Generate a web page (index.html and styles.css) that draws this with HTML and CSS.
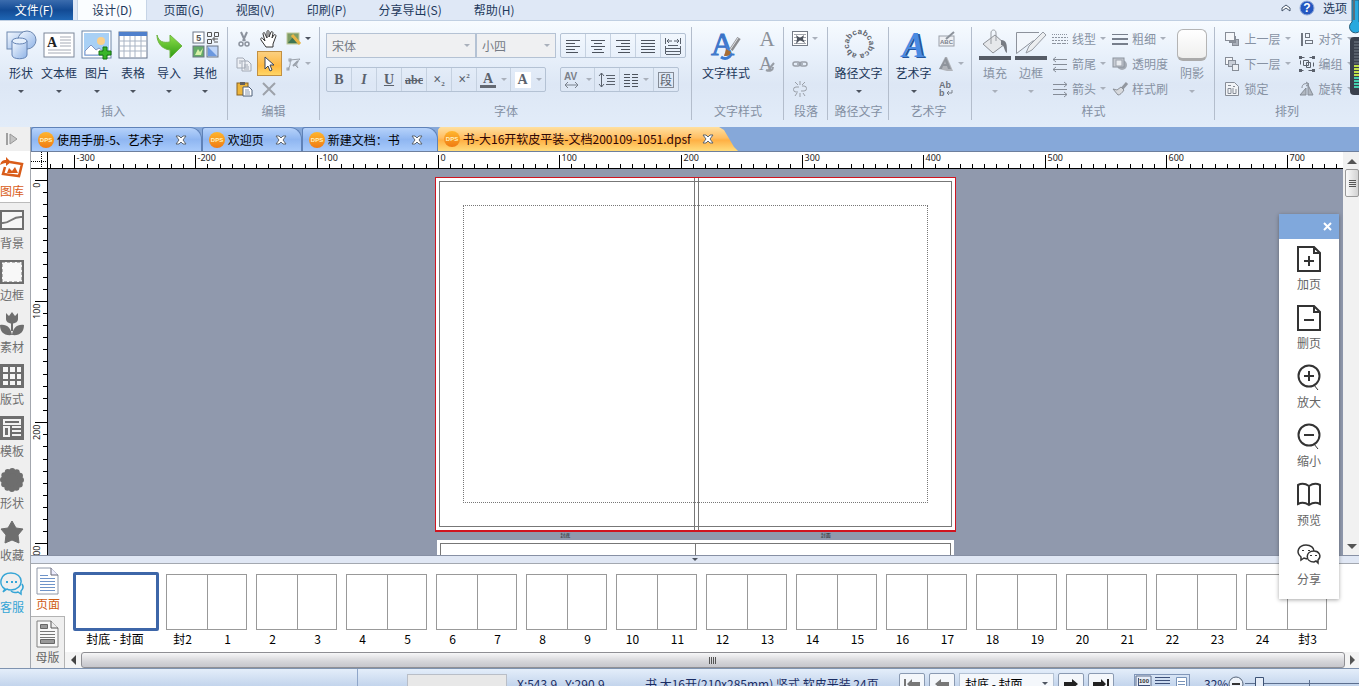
FILE: index.html
```html
<!DOCTYPE html>
<html lang="zh-CN">
<head>
    <meta charset="UTF-8">
    <meta name="viewport" content="width=device-width, initial-scale=1.0">
    <title>书-大16开软皮平装-文档200109-1051.dpsf</title>
    <link rel="stylesheet" href="styles.css">
</head>
<body>
    <svg class="defs" width="0" height="0" aria-hidden="true">
        <defs>
            <linearGradient id="g-blue" x1="0" y1="0" x2="1" y2="1"><stop offset="0" stop-color="#f4f9ff"/><stop offset="1" stop-color="#8fb3e6"/></linearGradient>
            <linearGradient id="g-green" x1="0" y1="0" x2="0" y2="1"><stop offset="0" stop-color="#8fe04a"/><stop offset="1" stop-color="#2c9a12"/></linearGradient>
            <linearGradient id="g-letter" x1="0" y1="0" x2="0" y2="1"><stop offset="0" stop-color="#2f62b8"/><stop offset="1" stop-color="#5c9bee"/></linearGradient>
            <linearGradient id="g-dps" x1="0" y1="0" x2="0" y2="1"><stop offset="0" stop-color="#ffb62e"/><stop offset="1" stop-color="#f07b12"/></linearGradient>
        </defs>
        <symbol id="dps" viewBox="0 0 16 16"><circle cx="8" cy="8" r="8" fill="url(#g-dps)"/><text x="8" y="10" text-anchor="middle" font-size="6" font-weight="bold" fill="#fff3c0" font-family="Liberation Sans">DPS</text></symbol>
        <symbol id="close" viewBox="0 0 12 10"><path d="M1 1h3l2 2 2-2h3L8 5l3 4H8L6 7 4 9H1l3-4z" fill="#fff" stroke="#5d6670"/></symbol>
    </svg>

    <nav class="menu">
        <button class="file">文件(F)</button>
        <button class="current">设计(D)</button>
        <button>页面(G)</button>
        <button>视图(V)</button>
        <button>印刷(P)</button>
        <button>分享导出(S)</button>
        <button>帮助(H)</button>
        <div class="menu-right">
            <svg width="10" height="8" viewBox="0 0 10 8"><path d="M1 4l4-3 4 3v3L5 4 1 7z" fill="#fff" stroke="#44546a"/></svg>
            <svg width="16" height="16" viewBox="0 0 16 16"><circle cx="8" cy="8" r="7" fill="#2456c0" stroke="#8fa8d8"/><text x="8" y="12" text-anchor="middle" font-size="12" font-weight="bold" fill="#fff" font-family="Liberation Sans">?</text></svg>
            <button>选项 <i class="caret"></i></button>
        </div>
    </nav>

    <header class="ribbon">
        <section class="group insert">
            <div class="tools">
                <button class="big"><svg width="32" height="32" viewBox="0 0 32 32"><rect x="2" y="3" width="20" height="17" fill="url(#g-blue)" stroke="#6d88b0"/><circle cx="22" cy="11" r="9" fill="url(#g-blue)" stroke="#6d88b0"/><path d="M7 12v14c0 5 15 5 15 0V12" fill="url(#g-blue)" stroke="#6483b4"/><ellipse cx="14.500" cy="12" rx="7.500" ry="3" fill="#e6f0fc" stroke="#6483b4"/></svg><span>形状</span><i class="caret"></i></button>
                <button class="big wide"><svg width="32" height="32" viewBox="0 0 32 32"><rect x="1" y="4" width="30" height="24" fill="#fff" stroke="#7c879a"/><text x="4" y="18" font-size="14" font-weight="bold" fill="#222" font-family="Liberation Serif">A</text><path d="M17 8h11M17 11h11M17 14h11M17 17h11M5 21h23M5 24h23" stroke="#a5aab5"/></svg><span>文本框</span><i class="caret"></i></button>
                <button class="big"><svg width="32" height="32" viewBox="0 0 32 32"><rect x="1" y="2" width="29" height="27" fill="#fff" stroke="#6f87a8"/><rect x="3" y="4" width="25" height="23" fill="#a8d0f5"/><circle cx="20" cy="12" r="4" fill="#fbd08a"/><path d="M4 26V22l6-6 5 5 3-2 9 7z" fill="#fff" stroke="#8296c4"/><path d="M22 18h4v4h4v4h-4v4h-4v-4h-4v-4h4z" fill="#38b528" stroke="#17750e"/></svg><span>图片</span><i class="caret"></i></button>
                <button class="big"><svg width="32" height="32" viewBox="0 0 32 32"><rect x="2" y="3" width="28" height="26" fill="#fff" stroke="#64728a"/><rect x="2" y="3" width="28" height="4" fill="#4f80cc"/><path d="M2 12h28M2 17h28M2 22h28M7 7v22M13 7v22M18 7v22M24 7v22" stroke="#a9b4c4"/></svg><span>表格</span><i class="caret"></i></button>
                <button class="big"><svg width="32" height="32" viewBox="0 0 32 32"><path d="M4 6c2 7 6 8 13 7V6l12 11-12 12v-8C9 20 4 14 4 6z" fill="url(#g-green)" stroke="#6fb544"/></svg><span>导入</span><i class="caret"></i></button>
                <button class="big"><svg width="32" height="32" viewBox="0 0 32 32"><g fill="#fff" stroke="#6c7686"><rect x="4" y="3" width="11" height="11"/><rect x="4" y="17" width="11" height="11" fill="#64aa68"/><rect x="18" y="17" width="11" height="11" fill="#bfd5f8"/></g><text x="7" y="12" font-size="9" font-weight="bold" fill="#555" font-family="Liberation Mono">5</text><path d="M18.500 3.500h4v4h-4zM25.500 3.500h4v4h-4zM18.500 10.500h4v4h-4zM24 9h2v2h-2zM28 9v2M25 13h4" fill="none" stroke="#555"/><path d="M6 26l3-6 2 3 3-4-2 7z" fill="#d8f1a8"/><path d="M19 18l9 9h-9z" fill="#6b98df"/></svg><span>其他</span><i class="caret"></i></button>
            </div>
            <h2>插入</h2>
        </section>

        <section class="group edit">
            <div class="tools cells">
                <button aria-label="剪切"><svg width="16" height="16" viewBox="0 0 16 16"><path d="M5 1l4 9M11 1L7 10" stroke="#8b929d" stroke-width="2"/><circle cx="5" cy="13" r="2" fill="none" stroke="#8b929d" stroke-width="1.500"/><circle cx="11" cy="13" r="2" fill="none" stroke="#8b929d" stroke-width="1.500"/></svg></button>
                <button aria-label="移动"><svg width="18" height="18" viewBox="0 0 18 18"><path d="M6 17l-5-7c-1-2 1-3 2-1l2 2-2-7c0-2 2-2 2 0l2 4V2c0-2 2-2 2 0v5l2-5c1-1 2 0 2 1l-1 5 2-3c1-1 2 0 2 1l-3 8v3z" fill="#fff" stroke="#333"/></svg></button>
                <button aria-label="图片编辑"><svg width="16" height="16" viewBox="0 0 16 16"><rect x="1" y="2" width="12" height="11" fill="#7f9d64" stroke="#c0c99c"/><path d="M2 12l5-6 5 6z" fill="#3f7653"/><path d="M6 4l8 9" stroke="#e8b445" stroke-width="3"/></svg><i class="caret"></i></button>
                <button aria-label="复制"><svg width="16" height="16" viewBox="0 0 16 16" fill="#eef1f6" stroke="#a2a9b5"><path d="M1 2h6l2 2v8H1zM6 5h6l3 3v7H6z"/><path d="M3 5h3M3 7h2M8 9h4M8 11h5M8 13h5"/></svg></button>
                <button class="pressed" aria-label="选择"><svg width="16" height="18" viewBox="0 0 16 18"><path d="M4 2v12l3-3 2 5 2-1-2-5h4z" fill="#fff" stroke="#394358"/></svg></button>
                <button aria-label="节点"><svg width="16" height="16" viewBox="0 0 16 16" fill="none" stroke="#9aa1ab"><path d="M2 14c1-3 3-5 2-10M4 4l10-1M14 3c-4 4-4 6-2 9M12 12l-4-4"/><rect x="3" y="3" width="2" height="2"/><rect x="1" y="12" width="2" height="2"/><path d="M12 5L7 10" stroke-width="2"/></svg><i class="caret pale"></i></button>
                <button aria-label="粘贴"><svg width="17" height="16" viewBox="0 0 17 16"><rect x="1" y="2" width="11" height="12" fill="#eeb63c" stroke="#886223"/><rect x="4" y="1" width="5" height="3" fill="#62605c"/><path d="M7 6h6l3 3v6H7z" fill="#fff" stroke="#4f6079"/><path d="M9 9h4M9 11h5M9 13h5" stroke="#8999b1"/></svg></button>
                <button aria-label="删除"><svg width="14" height="14" viewBox="0 0 14 14"><path d="M1 1l12 12M13 1L1 13" stroke="#9da2aa" stroke-width="2"/></svg></button>
            </div>
            <h2>编辑</h2>
        </section>

        <section class="group font">
            <div class="tools lines">
                <div class="line">
                    <label class="combo family"><select aria-label="字体"><option>宋体</option></select><i class="caret pale"></i></label>
                    <label class="combo size"><select aria-label="字号"><option>小四</option></select><i class="caret pale"></i></label>
                    <div class="bar">
                        <button aria-label="左对齐"><svg width="16" height="14" viewBox="0 0 16 14"><path d="M1 1.500h14M1 4.500h9M1 7.500h14M1 10.500h9M1 13.500h12" stroke="#4c535d"/></svg></button>
                        <button aria-label="居中"><svg width="16" height="14" viewBox="0 0 16 14"><path d="M1 1.500h14M4 4.500h8M1 7.500h14M4 10.500h8M2 13.500h12" stroke="#4c535d"/></svg></button>
                        <button aria-label="右对齐"><svg width="16" height="14" viewBox="0 0 16 14"><path d="M1 1.500h14M6 4.500h9M1 7.500h14M6 10.500h9M3 13.500h12" stroke="#4c535d"/></svg></button>
                        <button aria-label="两端对齐"><svg width="16" height="14" viewBox="0 0 16 14"><path d="M1 1.500h14M1 4.500h14M1 7.500h14M1 10.500h14M1 13.500h14" stroke="#4c535d"/></svg></button>
                        <button aria-label="分散对齐"><svg width="18" height="18" viewBox="0 0 18 18" fill="none" stroke="#59616c"><path d="M1.500 1v6M16.500 1v6M3 4h5M15 4h-5M5 2L3 4l2 2M13 2l2 2-2 2M4 8.500h10M2 11.500h14M2 14.500h14M2 17.500h14M1.500 9v8M16.500 9v8"/></svg></button>
                    </div>
                </div>
                <div class="line">
                    <div class="bar letters">
                        <button><b>B</b></button>
                        <button><em>I</em></button>
                        <button><u>U</u></button>
                        <button><s>abc</s></button>
                        <button>×<sub>2</sub></button>
                        <button>×<sup>2</sup></button>
                        <button class="drop"><span class="inked">A</span><i class="caret pale"></i></button>
                        <button class="drop"><span class="plate">A</span><i class="caret pale"></i></button>
                    </div>
                    <div class="bar second">
                        <button class="drop"><svg width="18" height="18" viewBox="0 0 18 18"><text x="1" y="9" font-size="10" font-weight="bold" fill="#7b818a" font-family="Liberation Sans">AV</text><path d="M2 14h13M5 11l-3 3 3 3M12 11l3 3-3 3" fill="none" stroke="#79818c"/></svg><i class="caret pale"></i></button>
                        <button aria-label="行距"><svg width="16" height="16" viewBox="0 0 16 16" fill="none" stroke="#59616c"><path d="M2.500 1v14M0 4l2.500-3L5 4M0 12l2.500 3L5 12M7 3.500h9M8 6.500h8M8 9.500h8M7 12.500h9"/></svg></button>
                        <button class="drop" aria-label="分栏"><svg width="14" height="14" viewBox="0 0 14 14"><path d="M0 1.500h6M0 4.500h6M0 7.500h6M0 10.500h6M0 13.500h6M8 1.500h6M8 4.500h6M8 7.500h6M8 10.500h6M8 13.500h6" stroke="#4c535d"/></svg><i class="caret pale"></i></button>
                        <button><span class="boxed">段</span></button>
                    </div>
                </div>
            </div>
            <h2>字体</h2>
        </section>

        <section class="group textstyle">
            <div class="tools">
                <button class="big"><svg width="32" height="32" viewBox="0 0 32 32"><text x="1" y="26" font-size="32" fill="url(#g-letter)" stroke="#3b74c8" font-family="Liberation Serif">A</text><path d="M29 9l-8 12" stroke="#8b8c8f" stroke-width="4"/><path d="M28 9l-8 12" stroke="#e4e5e8" stroke-width="1"/><path d="M11 28c4 3 9 1 10-3" fill="none" stroke="#3b7ad0" stroke-width="3"/><path d="M16 20l5 3c-1 4-4 4-7 4 1-2 1-4 2-7z" fill="#a76d32"/></svg><span>文字样式</span></button>
                <div class="stack">
                    <button class="glyph">A</button>
                    <button class="glyph"><svg width="18" height="18" viewBox="0 0 18 18"><text x="1" y="15" font-size="19" fill="#8b9199" font-family="Liberation Serif">A</text><path d="M16 8l-5 6M8 15c4 2 7 0 7-3" stroke="#989da5" stroke-width="2" fill="none"/></svg></button>
                </div>
            </div>
            <h2>文字样式</h2>
        </section>

        <section class="group para">
            <div class="tools stack">
                <button aria-label="环绕"><svg width="16" height="16" viewBox="0 0 16 16"><rect x="0.500" y="0.500" width="15" height="14" fill="#fff" stroke="#747b86"/><path d="M2 3.500h12M2 6.500h12M2 9.500h12M2 12.500h12" stroke="#a2a6ad"/><path d="M4 4l4 3 4-3-1 4 2 4-5-3-4 4 1-5z" fill="#4e545e"/></svg><i class="caret pale"></i></button>
                <button aria-label="链接"><svg width="16" height="8" viewBox="0 0 16 8" fill="none" stroke="#999fa8" stroke-width="1.500"><rect x="1" y="2" width="7" height="4" rx="2"/><rect x="8" y="2" width="7" height="4" rx="2"/><path d="M5 4h6"/></svg></button>
                <button aria-label="取消链接"><svg width="16" height="16" viewBox="0 0 16 16" fill="none" stroke="#999fa8"><path d="M7 6H4a2 2 0 0 0 0 5h2M9 10h3a2 2 0 0 0 0-5h-2M8 0v4M3 1l3 3M13 1l-3 3M8 12v4M5 12l-2 3M11 12l2 3"/></svg></button>
            </div>
            <h2>段落</h2>
        </section>

        <section class="group path">
            <div class="tools">
                <button class="big"><svg width="32" height="32" viewBox="0 0 32 32"><path id="ring" d="M14 25A10 10 0 1 1 18 25" fill="none"/><text font-size="8" font-weight="bold" fill="#60656e" font-family="Liberation Sans"><textPath href="#ring">abcabcabcabcab</textPath></text></svg><span>路径文字</span><i class="caret"></i></button>
            </div>
            <h2>路径文字</h2>
        </section>

        <section class="group wordart">
            <div class="tools">
                <button class="big"><svg width="32" height="32" viewBox="0 0 32 32"><text x="6" y="29" font-size="35" font-style="italic" font-weight="bold" fill="#23559f" font-family="Liberation Serif">A</text><text x="4" y="28" font-size="35" font-style="italic" font-weight="bold" fill="#4a8ae2" font-family="Liberation Serif">A</text></svg><span>艺术字</span><i class="caret"></i></button>
                <div class="stack">
                    <button aria-label="编辑艺术字"><svg width="18" height="16" viewBox="0 0 18 16"><rect x="1" y="5" width="15" height="10" fill="#eef0f4" stroke="#9aa0a9"/><text x="2" y="13" font-size="6" font-weight="bold" fill="#7a818c" font-family="Liberation Sans">ABC</text><path d="M16 1L8 8" stroke="#8c929b" stroke-width="2"/></svg></button>
                    <button aria-label="艺术字形状"><svg width="16" height="16" viewBox="0 0 16 16"><path d="M1 13L7 1h2l6 14H9z" fill="#b1b4ba"/><path d="M1 13h3l1-3h4l1 3h3L8 1zM6 8l1-3 1 3z" fill="#8f949c" fill-rule="evenodd"/></svg><i class="caret pale"></i></button>
                    <button aria-label="艺术字方向"><svg width="16" height="16" viewBox="0 0 16 16"><g font-size="9" font-weight="bold" fill="#6c727c" font-family="Liberation Sans"><text x="1" y="7">Ab</text><text x="1" y="15">b</text></g><path d="M14 9v3h-5M11 10l-2 2 2 2" fill="none" stroke="#7b818a"/></svg></button>
                </div>
            </div>
            <h2>艺术字</h2>
        </section>

        <section class="group style">
            <div class="tools">
                <button class="big off"><svg width="32" height="32" viewBox="0 0 32 32"><path d="M4 15l12-9 10 9-12 9z" fill="#e6e8eb" stroke="#8c9096"/><path d="M12 15V4c0-4 5-4 5 0v8" fill="none" stroke="#999da3"/><path d="M22 11c6 0 6 5 6 13-3-1-2-8-6-8z" fill="#777c84"/><path d="M0 27h32v4H0z" fill="#555b66"/></svg><span>填充</span><i class="caret pale"></i></button>
                <button class="big off"><svg width="32" height="32" viewBox="0 0 32 32"><path d="M24 3.500H1.500v21l17-13" fill="#f2f6fb" stroke="#8d929b"/><path d="M11 24l3-7L28 3l3 3-14 15z" fill="#eceef0" stroke="#969ba3"/><path d="M0 27h32v4H0z" fill="#555b66"/></svg><span>边框</span><i class="caret pale"></i></button>
                <div class="stack col-a">
                    <button><svg width="16" height="14" viewBox="0 0 16 14"><path d="M0 2.500h16" stroke="#8d949f" stroke-dasharray="1 1"/><path d="M0 5.500h16M0 8.500h16" stroke="#8d949f" stroke-dasharray="2 1"/><path d="M0 11.500h16" stroke="#8d949f" stroke-dasharray="4 1"/></svg>线型<i class="caret pale"></i></button>
                    <button><svg width="16" height="14" viewBox="0 0 16 14"><path d="M1 2.500h14M1 7.500h14M1 12.500h14M4 0L1 2.500 4 5M4 10l-3 2.500L4 15" fill="none" stroke="#858c97"/></svg>箭尾<i class="caret pale"></i></button>
                    <button><svg width="16" height="14" viewBox="0 0 16 14"><path d="M1 2.500h14M1 7.500h14M1 12.500h14M12 0l3 2.500L12 5M12 10l3 2.500-3 2.500" fill="none" stroke="#858c97"/></svg>箭头<i class="caret pale"></i></button>
                </div>
                <div class="stack col-b">
                    <button><svg width="16" height="14" viewBox="0 0 16 14"><path d="M0 2.500h16" stroke="#777f8c"/><path d="M0 7h16M0 12h16" stroke="#777f8c" stroke-width="2"/></svg>粗细<i class="caret pale"></i></button>
                    <button><svg width="16" height="16" viewBox="0 0 16 16"><circle cx="10" cy="9" r="5" fill="#a5abb4"/><rect x="1" y="2" width="11" height="9" fill="#c6cbd3" stroke="#8a919b"/><rect x="4" y="4" width="6" height="6" fill="#e9ecf0" stroke="#9da3ad"/></svg>透明度</button>
                    <button><svg width="16" height="16" viewBox="0 0 16 16"><path d="M15 2L8 10" stroke="#92979f" stroke-width="3"/><path d="M1 8l4 1 4-3 3 3c-2 3-4 5-6 5z" fill="#d7d9dd" stroke="#8c9199"/></svg>样式刷</button>
                </div>
                <button class="big off"><span class="shadow-box"></span><span>阴影</span><i class="caret pale"></i></button>
            </div>
            <h2>样式</h2>
        </section>

        <section class="group arrange">
            <div class="tools">
                <div class="stack">
                    <button><svg width="16" height="16" viewBox="0 0 16 16" stroke="#878d97"><rect x="8.500" y="8.500" width="6" height="6" fill="#aab0ba"/><rect x="5.500" y="5.500" width="6" height="6" fill="#8d939d"/><rect x="1.500" y="1.500" width="9" height="8" fill="#f5f7fa"/></svg>上一层<i class="caret pale"></i></button>
                    <button><svg width="16" height="16" viewBox="0 0 16 16" stroke="#878d97"><rect x="1.500" y="1.500" width="7" height="7" fill="#f5f7fa"/><rect x="4.500" y="4.500" width="7" height="6" fill="#c9ced7"/><rect x="8.500" y="8.500" width="6" height="6" fill="#edf0f4"/></svg>下一层<i class="caret pale"></i></button>
                    <button><svg width="16" height="16" viewBox="0 0 16 16" fill="#f2f4f7" stroke="#878d97"><path d="M1.500 1.500h9l4 4v9h-13z"/><path d="M4 4.500h3M4 7.500h3v5H4zM9 7v5.500h3V8M9 5.500h2"/></svg>锁定</button>
                </div>
                <div class="stack">
                    <button><svg width="16" height="16" viewBox="0 0 16 16" fill="none" stroke="#707680"><path d="M3 2v13" stroke-width="2"/><rect x="6.500" y="2.500" width="4" height="4"/><rect x="6.500" y="9.500" width="7" height="3"/></svg>对齐<i class="caret pale"></i></button>
                    <button><svg width="16" height="16" viewBox="0 0 16 16" fill="none" stroke="#5b616c"><path d="M1.500 1.500h13v13h-13z" stroke-dasharray="4 5"/><path d="M4.500 4.500h5v5h-5zM7.500 6.500h4v5h-4z"/><path d="M0 0h3v3H0zM13 0h3v3h-3zM0 13h3v3H0zM13 13h3v3h-3z" fill="#5b616c" stroke="none"/></svg>编组<i class="caret pale"></i></button>
                    <button><svg width="16" height="16" viewBox="0 0 16 16"><path d="M1 14h6V7zM9 14V4l5 10z" fill="#b1b7c0" stroke="#858c96"/><path d="M3 7c0-4 3-5 6-4M7 1l3 2-3 2" fill="none" stroke="#858c96"/></svg>旋转<i class="caret pale"></i></button>
                </div>
            </div>
            <h2>排列</h2>
        </section>
    </header>

    <main>
        <aside class="library">
            <button class="toggle" aria-label="展开"><svg width="12" height="14" viewBox="0 0 12 14"><path d="M1 1v12" stroke="#a0a0a0" stroke-width="2"/><path d="M4 2l7 5-7 5z" fill="#c4c4c4" stroke="#979797"/></svg></button>
            <a href="#" class="hot"><svg width="24" height="24" viewBox="0 0 24 24"><path d="M10 6l12 2-3 12L3 18l2-7" fill="none" stroke="#d95c19" stroke-width="2.500"/><path d="M0 9c1-4 3-5 6-5V1l5 5-5 4V7C3 7 2 8 0 9zM7 17l2-5 3 3 3-4 3 6z" fill="#d95c19"/></svg>图库</a>
            <a href="#"><svg width="24" height="24" viewBox="0 0 24 24"><rect x="1" y="3" width="22" height="18" fill="#f6f6f6" stroke="#6e6e6e" stroke-width="2"/><path d="M2 15c8 1 10-7 20-6" fill="none" stroke="#777" stroke-width="2"/></svg>背景</a>
            <a href="#"><svg width="24" height="24" viewBox="0 0 24 24"><rect x="1" y="1" width="22" height="22" fill="#f8f8f8" stroke="#6e6e6e" stroke-width="2"/><rect x="2" y="2" width="20" height="20" fill="none" stroke="#6e6e6e" stroke-dasharray="3 2"/></svg>边框</a>
            <a href="#"><svg width="24" height="24" viewBox="0 0 24 24" fill="#6e6e6e"><path d="M6 1l3 3 3-4 3 4 3-3v6c0 6-12 6-12 0zM11 10h2v9h-2z"/><path d="M0 13c7-1 11 3 12 10C4 24 0 20 0 13zM24 13c-7-1-11 3-12 10 8 1 12-3 12-10z"/></svg>素材</a>
            <a href="#"><svg width="24" height="24" viewBox="0 0 24 24"><path d="M0 0h24v24H0z" fill="#6e6e6e"/><path d="M3 3h5v5H3zM10 3h5v5h-5zM17 3h4v5h-4zM3 10h5v5H3zM10 10h5v5h-5zM17 10h4v5h-4zM3 17h5v4H3zM10 17h5v4h-5zM17 17h4v4h-4z" fill="#f6f6f6"/></svg>版式</a>
            <a href="#"><svg width="24" height="24" viewBox="0 0 24 24"><path d="M0 0h24v24H0z" fill="#6e6e6e"/><path d="M4 4h16v4H4zM4 11h5v9H4zM12 11h9M12 15h9M12 19h9" fill="none" stroke="#f2f2f2" stroke-width="2"/></svg>模板</a>
            <a href="#"><svg width="24" height="24" viewBox="0 0 24 24"><circle cx="12" cy="12" r="10" fill="#6e6e6e"/><circle cx="12" cy="12" r="9" fill="none" stroke="#6e6e6e" stroke-width="6" stroke-linecap="round" stroke-dasharray="0 4.712"/></svg>形状</a>
            <a href="#"><svg width="24" height="24" viewBox="0 0 24 24"><path d="M12 1l4 7 7 1-5 6 1 8-7-3-7 3 1-8-5-6 7-1z" fill="#6e6e6e" stroke="#6e6e6e" stroke-linejoin="round"/></svg>收藏</a>
            <a href="#" class="service"><svg width="24" height="24" viewBox="0 0 24 24" fill="none" stroke="#35a5d6" stroke-width="1.500"><path d="M3 20l2-3C-2 13 0 1 11 1c13 0 14 16 0 17-2 0-3 0-4-1z"/><path d="M22 12c2 3 1 5-1 7v3l-3-2c-3 1-6 0-7-1"/><path d="M6 10h2M11 10h2M15 10h2" stroke-width="2"/></svg>客服</a>
        </aside>

        <div class="work">
            <div class="doctabs">
                <div class="doctab"><svg width="16" height="16"><use href="#dps"/></svg>使用手册-5、艺术字<button aria-label="关闭"><svg width="12" height="10"><use href="#close"/></svg></button></div>
                <div class="doctab"><svg width="16" height="16"><use href="#dps"/></svg>欢迎页<button aria-label="关闭"><svg width="12" height="10"><use href="#close"/></svg></button></div>
                <div class="doctab"><svg width="16" height="16"><use href="#dps"/></svg>新建文档：书<button aria-label="关闭"><svg width="12" height="10"><use href="#close"/></svg></button></div>
                <div class="doctab open"><svg width="16" height="16"><use href="#dps"/></svg>书-大16开软皮平装-文档200109-1051.dpsf<button aria-label="关闭"><svg width="12" height="10"><use href="#close"/></svg></button></div>
            </div>

            <div class="desk">
                <div class="corner"></div>
                <svg class="ruler-x" id="ruler-x"></svg>
                <div class="vscroll">
                    <i class="arrow up"></i>
                    <div class="vthumb"></div>
                    <i class="arrow down"></i>
                </div>
                <svg class="ruler-y" id="ruler-y"></svg>
                <div class="canvas">
                    <div class="spread cover">
                        <div class="trim"></div>
                        <div class="safe"></div>
                        <div class="spine"></div>
                    </div>
                    <div class="captions"><span>封底</span><span>封面</span></div>
                    <div class="spread next"><div></div><div></div></div>
                </div>
            </div>

            <div class="splitter"><i class="caret"></i></div>

            <div class="pages">
                <div class="pagetabs">
                    <button class="on"><svg width="24" height="28" viewBox="0 0 24 28"><path d="M1 1h14l7 7v19H1z" fill="#fff" stroke="#9098a8"/><path d="M15 1v7h7" fill="#eef" stroke="#667"/><path d="M4 8.500h8M4 11.500h15M4 14.500h15M4 17.500h15M4 20.500h15M4 23.500h15" stroke="#6f94c9"/></svg>页面</button>
                    <button><svg width="24" height="28" viewBox="0 0 24 28"><path d="M1 1h14l7 7v19H1z" fill="#f8f8f8" stroke="#808080"/><path d="M15 1v7h7" fill="#eee" stroke="#555"/><path d="M4.500 4.500h7v4h-7zM4.500 19.500h14v4h-14z" fill="#999" stroke="#666"/><path d="M4 11.500h15M4 14.500h15M4 17.500h15" stroke="#777"/></svg>母版</button>
                </div>
                <div class="strip">
                    <ol class="thumbs" id="thumbs"></ol>
                    <div class="hscroll">
                        <i class="arrow left"></i>
                        <div class="hthumb"><span></span></div>
                        <i class="arrow right"></i>
                    </div>
                </div>
            </div>

            <div class="quick">
                <header><button aria-label="关闭"><svg width="9" height="9" viewBox="0 0 9 9"><path d="M1 1l7 7M8 1L1 8" stroke="#fff" stroke-width="2"/></svg></button></header>
                <button><svg width="24" height="26" viewBox="0 0 24 26" fill="none" stroke="#333" stroke-width="2"><path d="M1 1h16l6 6v18H1zM17 1v6h6M12 10v10M7 15h10"/></svg>加页</button>
                <button><svg width="24" height="26" viewBox="0 0 24 26" fill="none" stroke="#333" stroke-width="2"><path d="M1 1h16l6 6v18H1zM17 1v6h6M7 15h10"/></svg>删页</button>
                <button><svg width="24" height="26" viewBox="0 0 24 26" fill="none" stroke="#333" stroke-width="2"><circle cx="12" cy="12" r="10.500"/><path d="M12 7v10M7 12h10"/><path d="M17 21l4 5" stroke-width="1"/></svg>放大</button>
                <button><svg width="24" height="26" viewBox="0 0 24 26" fill="none" stroke="#333" stroke-width="2"><circle cx="12" cy="12" r="10.500"/><path d="M7 12h10"/><path d="M17 21l4 5" stroke-width="1"/></svg>缩小</button>
                <button><svg width="24" height="26" viewBox="0 0 24 26" fill="none" stroke="#333" stroke-width="2"><path d="M1 3c4-2 8-1 11 1 3-2 7-3 11-1v19c-4-2-8-1-11 1-3-2-7-3-11-1zM12 4v19"/></svg>预览</button>
                <button><svg width="24" height="26" viewBox="0 0 24 26" fill="none" stroke="#333" stroke-width="1.500"><path d="M10 18l-3-1-3 2v-3C-2 11 2 4 9 4c5 0 8 3 8 6M17 10c-9 0-9 11 0 11l2-1 2 2v-3c4-4 1-9-4-9z"/><path d="M6 9v1M12 9v1M14 14v1M19 14v1" stroke-width="2"/></svg>分享</button>
            </div>
        </div>
    </main>

    <footer class="status">
        <div class="message"></div>
        <div class="progress"></div>
        <span class="coords">X:543.9&nbsp;&nbsp; Y:290.9</span>
        <span class="docinfo">书 大16开(210x285mm) 竖式 软皮平装 24页</span>
        <div class="pager">
            <button aria-label="首页"><svg width="16" height="12" viewBox="0 0 16 12"><path d="M0 1h2v10H0zM3 6l5-5v3h8v4H8v3z" fill="#777"/></svg></button>
            <button aria-label="上一页"><svg width="16" height="12" viewBox="0 0 16 12"><path d="M1 6l6-5v3h8v4H7v3z" fill="#777"/></svg></button>
            <label class="combo goto"><select aria-label="页"><option>封底 - 封面</option></select><i class="caret"></i></label>
            <button aria-label="下一页"><svg width="16" height="12" viewBox="0 0 16 12"><path d="M15 6L9 1v3H1v4h8v3z" fill="#222"/></svg></button>
            <button aria-label="末页"><svg width="16" height="12" viewBox="0 0 16 12"><path d="M14 1h2v10h-2zM13 6L8 1v3H0v4h8v3z" fill="#222"/></svg></button>
        </div>
        <div class="views"><svg width="54" height="18" viewBox="0 0 54 18"><path d="M1 1h15v16H1z" fill="#e6edf8" stroke="#60708d"/><text x="4" y="8" font-size="6" font-weight="bold" fill="#333" font-family="Liberation Sans">100</text><path d="M3 10.500h12M3.500 3v13M20 2.500h15M20 5.500h15M20 8.500h15M20 11.500h15M20 14.500h15" stroke="#3c4f78"/><path d="M41.500 2.500h10v14h-10z" fill="#fff" stroke="#7893b8"/><path d="M43 6.500h7M43 9.500h7M43 12.500h7" stroke="#7893b8"/></svg></div>
        <span class="percent">32%</span>
        <button class="zoom" aria-label="缩小"><svg width="16" height="16" viewBox="0 0 16 16"><circle cx="8" cy="8" r="7" fill="#eef3fa" stroke="#566479"/><path d="M4 8h8" stroke="#333" stroke-width="2"/></svg></button>
        <input type="range" min="0" max="100" value="8" aria-label="缩放">
        <button class="zoom" aria-label="放大"><svg width="16" height="16" viewBox="0 0 16 16"><circle cx="8" cy="8" r="7" fill="#eef3fa" stroke="#566479"/><path d="M4 8h8M8 4v8" stroke="#333" stroke-width="2"/></svg></button>
    </footer>

    <div class="gadget">
        <svg width="10" height="96" viewBox="0 0 10 96"><path d="M3 0v22a6 6 0 1 0 7 0V0z" fill="#27a9df" stroke="#245d7b"/><path d="M5 0v20" stroke="#5b6f7c" stroke-width="2"/><rect x="1" y="37" width="14" height="58" rx="4" fill="#3a404d"/><path d="M5 42h5M5 45h5M5 48h5M5 51h5M5 54h5M5 57h5M5 60h5M5 63h5" stroke="#77808c"/><path d="M5 66h5M5 69h5M5 72h5M5 75h5" stroke="#c2e04c" stroke-width="2"/><path d="M5 78h5M5 81h5M5 84h5M5 87h5" stroke="#46d0b0" stroke-width="2"/></svg>
    </div>

    <script src="script.js"></script>
</body>
</html>
```
FILE: styles.css
```css
* {
    margin: 0;
    padding: 0;
    box-sizing: border-box;
}

html {
    height: 100%;
    overflow: hidden;
}

body {
    display: flex;
    flex-direction: column;
    height: calc(100vh + 12px);
    overflow: hidden;
    font-family: "Noto Sans CJK SC", sans-serif;
    font-size: 12px;
    line-height: 16px;
    color: #1e395b;
    background-color: #dfe8f6;
}

button,
select {
    font: inherit;
    color: inherit;
    background: none;
    border: none;
}

svg {
    display: block;
    flex: none;
    overflow: visible;
}

.defs {
    position: absolute;
}

a {
    color: inherit;
    text-decoration: none;
}

.caret {
    width: 0;
    height: 0;
    flex: none;
    border: 3px solid transparent;
    border-top-color: #4d5460;
    border-bottom: none;
}

.caret.pale {
    border-top-color: #a9b0bb;
}

/* menu */

.menu {
    display: flex;
    flex: 0 0 21px;
    background-color: #dfe8f6;
    border-bottom: 1px solid #c0cfe2;
}

.menu button {
    padding: 0 16px;
    line-height: 20px;
    white-space: nowrap;
}

.menu .file {
    width: 73px;
    margin-right: 4px;
    padding: 0 5px 0 0;
    color: #fff;
    background: linear-gradient(#3b6cae, #124a94 50%, #1f66b4);
}

.menu .current {
    padding: 0 14px;
    background-color: #fafdff;
    border: 1px solid #c6d4e6;
    border-width: 0 1px;
}

.menu-right {
    display: flex;
    align-items: center;
    gap: 8px;
    height: 16px;
    margin-left: auto;
}

.menu-right button {
    display: flex;
    align-items: center;
    gap: 6px;
    padding: 0;
    line-height: 16px;
}

/* ribbon */

.ribbon {
    display: flex;
    flex: 0 0 106px;
    background: linear-gradient(#f7fbff, #e9f1fb 30%, #dde7f5 60%, #e2ecf9);
    overflow: hidden;
}

.group {
    position: relative;
    display: flex;
    flex: none;
    flex-direction: column;
    align-items: center;
    padding-top: 5px;
}

.group::after {
    content: "";
    position: absolute;
    top: 6px;
    right: 0;
    bottom: 7px;
    width: 1px;
    background-color: #b3bdcc;
}

.arrange::after {
    display: none;
}

.group h2 {
    margin-top: auto;
    padding-bottom: 8px;
    font-size: 12px;
    font-weight: normal;
    color: #8490a3;
}

.tools {
    display: flex;
    height: 76px;
}

.big {
    display: flex;
    flex-direction: column;
    align-items: center;
    width: 36px;
    padding-top: 3px;
    white-space: nowrap;
}

.big.wide {
    width: 40px;
}

.big > span:not(.shadow-box) {
    padding: 4px 0 9px;
}

.off,
.style,
.arrange {
    color: #8792a3;
}

.stack {
    display: flex;
    flex-direction: column;
}

.stack button {
    display: flex;
    align-items: center;
    gap: 4px;
    height: 25px;
    white-space: nowrap;
}

.insert {
    width: 228px;
    padding-right: 2px;
}

.edit {
    width: 92px;
    padding-right: 1px;
}

.edit .cells {
    display: grid;
    grid-template-columns: 25px 25px 34px;
    grid-auto-rows: 25px;
}

.cells button {
    display: flex;
    align-items: center;
    justify-content: center;
    gap: 3px;
}

.cells .pressed {
    background: linear-gradient(#fbd080, #ffb840 60%, #ffd667);
    border: 1px solid #c29042;
}

.font {
    width: 372px;
}

.font .lines {
    flex-direction: column;
    gap: 9px;
    padding-top: 7px;
}

.line {
    display: flex;
    width: 360px;
}

.combo {
    position: relative;
    display: flex;
    align-items: center;
    height: 25px;
    border: 1px solid #b4c2d4;
    background-color: #eff0f2;
}

.combo select {
    width: 100%;
    padding-left: 5px;
    appearance: none;
    color: #747a84;
}

.combo .caret {
    position: absolute;
    right: 5px;
    pointer-events: none;
}

.combo.family {
    width: 150px;
}

.combo.size {
    width: 80px;
    margin-right: 4px;
}

.bar {
    display: flex;
    height: 25px;
    border: 1px solid #b4c2d4;
    border-radius: 2px;
}

.bar button {
    display: flex;
    align-items: center;
    justify-content: center;
    width: 25px;
    border-right: 1px solid #c5d1e0;
}

.bar button:last-child {
    width: 24px;
    border-right: none;
}

.bar .drop,
.bar .drop:last-child {
    width: 34px;
    gap: 5px;
}

.bar.second {
    margin-left: 14px;
}

.letters button {
    font-family: "Liberation Serif", serif;
    font-size: 14px;
    font-weight: bold;
    color: #5b626d;
}

.letters s {
    font-size: 12px;
}

.letters sub,
.letters sup {
    font-size: 7px;
}

.letters sub {
    padding-top: 8px;
}

.letters sup {
    padding-bottom: 8px;
}

.inked {
    width: 16px;
    height: 17px;
    border-bottom: 3px solid #636973;
}

.plate {
    width: 16px;
    background-color: #fff;
}

.boxed {
    width: 16px;
    height: 16px;
    line-height: 14px;
    border: 1px solid #858c97;
    color: #59616c;
}

.textstyle {
    width: 92px;
}

.textstyle .big {
    width: 58px;
}

.textstyle .stack {
    width: 24px;
    align-items: center;
}

.glyph {
    font-family: "Liberation Serif", serif;
    font-size: 21px;
    color: #8b9199;
}

.para {
    width: 44px;
}

.para .tools {
    width: 28px;
}

.path {
    width: 61px;
}

.path .big {
    width: 58px;
}

.wordart {
    width: 83px;
    padding-right: 4px;
}

.wordart .big {
    width: 40px;
    margin-right: 4px;
}

.wordart .stack {
    width: 26px;
}

.style {
    width: 243px;
}

.style .col-a {
    width: 60px;
    margin-left: 3px;
}

.style .col-b {
    width: 62px;
}

.shadow-box {
    width: 30px;
    height: 32px;
    border: 1px solid #b4b4b4;
    border-bottom: 3px solid #aaa;
    border-radius: 6px;
    background: linear-gradient(#fff, #efefee);
}

.arrange {
    flex: 1 0 143px;
}

.arrange .tools {
    gap: 8px;
    padding-left: 3px;
}

/* middle */

main {
    display: flex;
    flex: 1;
    min-height: 0;
}

.library {
    display: flex;
    flex: 0 0 31px;
    flex-direction: column;
    background-color: #efefef;
    border-right: 1px solid #a3a7ae;
    color: #6e6e6e;
    overflow: hidden;
}

.library .toggle {
    display: flex;
    align-items: center;
    flex: 0 0 24px;
    padding-left: 6px;
}

.library a {
    flex: 0 0 52px;
    padding-top: 5px;
}

.library a svg {
    margin-bottom: 3px;
}

.library .hot {
    color: #d95c19;
    background-color: #fff;
    border-bottom: 1px solid #bbb;
}

.library .service {
    color: #35a5d6;
}

.work {
    position: relative;
    display: flex;
    flex: 1;
    flex-direction: column;
    min-width: 0;
}

.doctabs {
    display: flex;
    flex: 0 0 25px;
    background-color: #86a8d9;
    border-bottom: 1px solid #6d7f9d;
}

.doctab {
    display: flex;
    align-items: center;
    gap: 3px;
    height: 24px;
    padding: 0 14px 0 6px;
    white-space: nowrap;
    color: #000;
    background: linear-gradient(#b6d2fa, #8fb6f1 50%, #a9cbfb);
    border: 1px solid #5f82b8;
    border-bottom: none;
    border-radius: 3px 12px 0 0;
}

.doctab button {
    padding: 0 0 0 8px;
}

.doctab.open {
    padding-right: 24px;
    background: linear-gradient(#ffe0a0, #ffbe63 45%, #ffb044 55%, #ffdc7c);
    border: none;
    color: #2d0606;
    clip-path: polygon(0 3px, 2px 0, calc(100% - 19px) 0, calc(100% - 14px) 3px, calc(100% - 4px) 20px, 100% 100%, 0 100%);
}

.desk {
    display: grid;
    flex: 1;
    min-height: 0;
    grid-template-columns: 17px 1fr 16px;
    grid-template-rows: 17px 1fr;
    background-color: #fff;
}

.corner {
    border-right: 1px solid #000;
    border-bottom: 1px solid #000;
    background: repeating-linear-gradient(90deg, #000 0 1px, transparent 1px 2px) 0 9px / 100% 1px no-repeat,
        repeating-linear-gradient(#000 0 1px, transparent 1px 2px) 10px 0 / 1px 100% no-repeat;
}

.ruler-x {
    width: 100%;
    height: 17px;
    border-bottom: 1px solid #000;
    overflow: hidden;
}

.ruler-y {
    width: 17px;
    height: 100%;
    min-height: 0;
    border-right: 1px solid #000;
    overflow: hidden;
}

.ruler-x text,
.ruler-y text {
    font-family: "Noto Sans", sans-serif;
    font-size: 9px;
    fill: #222;
}

.canvas {
    display: flex;
    flex-direction: column;
    align-items: center;
    min-height: 0;
    padding-top: 8px;
    overflow: hidden;
    background-color: #9099ad;
}

.spread {
    flex: none;
    background-color: #fff;
}

.cover {
    position: relative;
    width: 521px;
    height: 355px;
    border: 1px solid #d0141f;
    border-bottom-width: 2px;
}

.trim {
    position: absolute;
    inset: 3px;
    border: 1px solid #777;
}

.safe {
    position: absolute;
    inset: 27px;
    border: 1px dotted #777;
}

.spine {
    position: absolute;
    top: 0;
    bottom: 0;
    left: calc(50% - 2px);
    width: 5px;
    border: 1px solid #777;
    border-width: 0 1px;
}

.captions {
    display: flex;
    flex: 0 0 8px;
    justify-content: space-around;
    width: 521px;
    font-size: 5px;
    line-height: 5px;
    color: #222;
}

.next {
    display: flex;
    width: 517px;
    height: 354px;
    padding: 3px;
}

.next div {
    flex: 1;
    border: 1px solid #777;
}

.next div + div {
    border-left: none;
}

.arrow {
    width: 0;
    height: 0;
    flex: none;
    border: 5px solid transparent;
}

.arrow.up {
    border-top: none;
    border-bottom-color: #555;
}

.arrow.down {
    margin-top: auto;
    border-bottom: none;
    border-top-color: #555;
}

.arrow.left {
    border-left: none;
    border-right-color: #444;
}

.arrow.right {
    border-right: none;
    border-left-color: #555;
}

.vscroll {
    display: flex;
    flex-direction: column;
    align-items: center;
    grid-column: 3;
    grid-row: 1 / 3;
    padding: 7px 0 6px 2px;
    background-color: #f1f1f1;
}

.vthumb {
    width: 14px;
    height: 28px;
    margin-top: 5px;
    border: 1px solid #999;
    border-radius: 2px;
    background: repeating-linear-gradient(#555 0 1px, transparent 1px 2px) center / 7px 7px no-repeat,
        linear-gradient(90deg, #fafafa, #d2d2d2);
}

.splitter {
    display: flex;
    flex: 0 0 9px;
    align-items: center;
    justify-content: center;
    background-color: #e0e7f4;
    border-top: 1px solid #8790a4;
    border-bottom: 1px solid #a3a8b0;
}

.pages {
    display: flex;
    flex: 0 0 104px;
    background-color: #fff;
}

.pagetabs {
    display: flex;
    flex: 0 0 34px;
    flex-direction: column;
}

.pagetabs button {
    display: flex;
    flex-direction: column;
    align-items: center;
    gap: 1px;
    height: 52px;
    padding-top: 3px;
    color: #666;
    background-color: #efefef;
    border: 1px solid #b3b3b3;
    border-width: 1px 1px 0 0;
}

.pagetabs .on {
    color: #cf5b12;
    background-color: #fff;
    border: none;
}

.strip {
    display: flex;
    flex: 1;
    flex-direction: column;
    min-width: 0;
}

.thumbs {
    display: flex;
    padding: 8px 0 0 5px;
    list-style: none;
    color: #000;
}

.thumbs li {
    flex: 0 0 90px;
}

.leaf {
    display: flex;
    width: 81px;
    height: 56px;
    margin: 2px 0 1px 6px;
    border: 1px solid #999;
}

.leaf::before {
    content: "";
    width: 50%;
    border-right: 1px solid #999;
}

.picked .leaf {
    width: 86px;
    height: 59px;
    margin: 0 0 0 3px;
    border: 3px solid #3d66a8;
    border-radius: 2px;
}

.picked .leaf::before {
    display: none;
}

.names {
    display: flex;
    text-align: center;
}

.names span {
    flex: 1;
}

.hscroll {
    display: flex;
    align-items: center;
    gap: 5px;
    margin-top: auto;
    padding: 0 4px 0 6px;
    background-color: #f4f4f4;
}

.hthumb {
    display: flex;
    flex: 1;
    align-items: center;
    justify-content: center;
    height: 16px;
    border: 1px solid #8f8f94;
    border-radius: 3px;
    background: linear-gradient(#f7f7f8, #d5d5d9 60%, #c6c6cc);
}

.hthumb span {
    width: 8px;
    height: 7px;
    background: repeating-linear-gradient(90deg, #555 0 1px, transparent 1px 2px);
}

/* quick panel floats over the desk */

.quick {
    position: absolute;
    top: 87px;
    right: 20px;
    display: flex;
    flex-direction: column;
    width: 60px;
    height: 385px;
    background-color: #fff;
    box-shadow: 0 1px 4px rgba(0, 0, 0, 0.35);
    color: #666;
}

.quick header {
    display: flex;
    flex: 0 0 25px;
    justify-content: flex-end;
    padding-right: 7px;
    margin-bottom: 7px;
    background-color: #80a8dc;
}

.quick > button {
    display: flex;
    flex: 0 0 59px;
    flex-direction: column;
    align-items: center;
    gap: 4px;
}

/* status bar */

.status {
    display: flex;
    flex: 0 0 30px;
    align-items: center;
    white-space: nowrap;
    color: #1a2d63;
    background: linear-gradient(#e4eefa, #c2d4ec 60%, #b0c8e8);
    border-top: 1px solid #7f93b0;
}

.message {
    flex: 1 0 358px;
    align-self: stretch;
    border-right: 1px solid #8fa6c9;
}

.progress {
    flex: 0 0 100px;
    height: 20px;
    margin: 0 10px 0 49px;
    background-color: #e8e8e8;
    border: 1px solid #b9bec7;
}

.coords {
    flex: 0 0 128px;
}

.docinfo {
    flex: 0 0 254px;
}

.pager {
    display: flex;
    gap: 4px;
    align-items: center;
}

.pager button {
    display: flex;
    align-items: center;
    justify-content: center;
    width: 26px;
    height: 21px;
    border: 1px solid #8a9ab2;
    border-radius: 2px;
    background-color: #f4f7fb;
}

.combo.goto {
    width: 95px;
    height: 21px;
    background-color: #f4f7fb;
}

.goto select {
    color: #000;
}

.views {
    margin-left: 20px;
    border: 1px solid #8196b8;
}

.percent {
    width: 25px;
    margin-left: 14px;
}

.status input {
    flex: 0 0 96px;
    height: 16px;
    margin: 0 1px;
    appearance: none;
    background: linear-gradient(#5c6f8e, #5c6f8e) center / 100% 1px no-repeat,
        linear-gradient(#5c6f8e, #5c6f8e) center / 1px 8px no-repeat;
}

.status input::-webkit-slider-thumb {
    appearance: none;
    width: 9px;
    height: 14px;
    background-color: #e6edf7;
    border: 1px solid #3d5275;
    border-radius: 1px 1px 5px 5px;
}

.gadget {
    position: absolute;
    top: 0;
    right: 0;
}
```
FILE: script.js
```javascript
const NS = "http://www.w3.org/2000/svg";
const STEP = 121.33;

function drawRuler(svg, vertical, origin, length, first) {
    let d = "";
    svg.innerHTML = "";
    for (let i = first * 10; origin + i * STEP / 10 < length; i++) {
        const p = Math.floor(origin + i * STEP / 10) + 0.5;
        if (p < 0) continue;
        const major = i % 10 === 0;
        if (vertical) {
            d += `M${major ? 4 : 12} ${p}H17`;
        } else {
            d += `M${p} ${major ? 3 : 12}V17`;
        }
        if (major) {
            const text = document.createElementNS(NS, "text");
            text.textContent = String(i * 10);
            if (vertical) {
                text.setAttribute("transform", `translate(9 ${p + 2}) rotate(-90)`);
                text.setAttribute("text-anchor", "end");
            } else {
                text.setAttribute("x", p + 2);
                text.setAttribute("y", 9);
            }
            svg.appendChild(text);
        }
    }
    const path = document.createElementNS(NS, "path");
    path.setAttribute("d", d);
    path.setAttribute("stroke", "#000");
    svg.appendChild(path);
}

function drawRulers() {
    const x = document.getElementById("ruler-x");
    const y = document.getElementById("ruler-y");
    const w = x.getBoundingClientRect().width;
    // zero sits on the left trim line of the centred spread
    drawRuler(x, false, w / 2 - 257, w, -6);
    drawRuler(y, true, 11, y.getBoundingClientRect().height, 0);
}

const names = ["封2"];
for (let n = 1; n <= 24; n++) names.push(n);
names.push("封3");

let html = '<li class="picked"><div class="leaf"></div><div class="names"><span>封底 - 封面</span></div></li>';
for (let i = 0; i < names.length; i += 2) {
    html += `<li><div class="leaf"></div><div class="names"><span>${names[i]}</span><span>${names[i + 1]}</span></div></li>`;
}
document.getElementById("thumbs").innerHTML = html;

drawRulers();
window.addEventListener("resize", drawRulers);
```
